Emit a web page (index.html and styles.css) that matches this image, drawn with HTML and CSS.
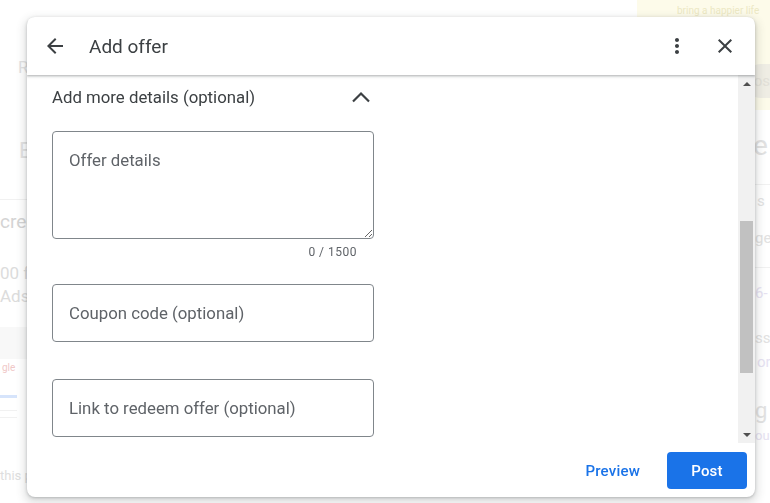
FILE: index.html
```html
<!DOCTYPE html>
<html lang="en">
<head>
    <meta charset="UTF-8">
    <meta name="viewport" content="width=device-width, initial-scale=1.0">
    <title>Add offer</title>
    <link rel="stylesheet" href="styles.css">
</head>
<body>
    <!-- Faded page behind the dialog -->
    <div class="page">
        <div class="page-left">
            <div class="bg-r">R</div>
            <div class="bg-e">E</div>
            <div class="bg-rule"></div>
            <div class="bg-cred">credible</div>
            <div class="bg-small">00 free</div>
            <div class="bg-small bg-ads">Ads</div>
            <div class="bg-block"></div>
            <div class="bg-logo">gle</div>
            <div class="bg-bar"></div>
            <div class="bg-rule bg-rule-a"></div>
            <div class="bg-rule bg-rule-b"></div>
            <div class="bg-this">this page</div>
        </div>
        <div class="page-right">
            <div class="bg-banner">
                <span class="bg-banner-text">bring a happier life</span>
                <span class="bg-pill">os</span>
            </div>
            <div class="bg-big">e</div>
            <div class="bg-rule"></div>
            <div class="bg-s">s</div>
            <div class="bg-ge">ge</div>
            <div class="bg-rule"></div>
            <div class="bg-ge bg-six">6-</div>
            <div class="bg-s bg-ss">ss</div>
            <div class="bg-s bg-or">or</div>
            <div class="bg-g">g</div>
            <div class="bg-s bg-ou">ou</div>
        </div>
    </div>

    <div class="dialog">
        <header class="dialog-head">
            <button class="icon-btn" aria-label="Back">
                <svg width="24" height="24" viewBox="0 0 24 24"><path d="M20 11H7.83l5.59-5.59L12 4l-8 8 8 8 1.41-1.41L7.83 13H20v-2z"/></svg>
            </button>
            <h1 class="dialog-title">Add offer</h1>
            <button class="icon-btn" aria-label="More">
                <svg width="24" height="24" viewBox="0 0 24 24"><path d="M12 8c1.1 0 2-.9 2-2s-.9-2-2-2-2 .9-2 2 .9 2 2 2zm0 2c-1.1 0-2 .9-2 2s.9 2 2 2 2-.9 2-2-.9-2-2-2zm0 6c-1.1 0-2 .9-2 2s.9 2 2 2 2-.9 2-2-.9-2-2-2z"/></svg>
            </button>
            <button class="icon-btn" aria-label="Close">
                <svg width="24" height="24" viewBox="0 0 24 24"><path d="M19 6.41L17.590 5 12 10.59 6.41 5 5 6.41 10.59 12 5 17.59 6.41 19 12 13.41 17.59 19 19 17.59 13.41 12z"/></svg>
            </button>
        </header>

        <div class="dialog-body">
            <div class="scroll-area">
                <div class="section-head">
                    <span>Add more details (optional)</span>
                    <svg class="chevron" width="20" height="12" viewBox="0 0 20 12"><path d="M2 10.5 10 2.5 18 10.5" fill="none" stroke="#3c4043" stroke-width="2.2"/></svg>
                </div>

                <textarea class="field field-area" placeholder="Offer details"></textarea>
                <div class="counter">0 / 1500</div>

                <input class="field field-line field-coupon" type="text" placeholder="Coupon code (optional)">
                <input class="field field-line field-link" type="text" placeholder="Link to redeem offer (optional)">
            </div>

            <div class="scrollbar">
                <div class="sb-btn"><span class="sb-up"></span></div>
                <div class="sb-track"><div class="sb-thumb"></div></div>
                <div class="sb-btn"><span class="sb-down"></span></div>
            </div>
        </div>

        <footer class="dialog-foot">
            <button class="btn-text">Preview</button>
            <button class="btn-primary">Post</button>
        </footer>
    </div>
</body>
</html>
```

FILE: styles.css
```css
body {
    margin: 0;
    width: 770px;
    height: 503px;
    overflow: hidden;
    background: #ffffff;
    font-family: Roboto, "Liberation Sans", sans-serif;
}

/* Faded page behind the dialog */
.page {
    display: flex;
    justify-content: space-between;
    height: 503px;
    color: #e2e2e2;
}

.page-left {
    width: 120px;
    padding-top: 56px;
}

.bg-r {
    padding-left: 18px;
    font-size: 17px;
    line-height: 22px;
}

.bg-e {
    margin-top: 58px;
    padding-left: 19px;
    font-size: 22px;
    line-height: 30px;
}

.bg-rule {
    height: 1px;
    background: #f1f1f1;
    margin-top: 33px;
}

.bg-cred {
    margin-top: 10px;
    font-size: 19px;
    line-height: 24px;
    color: #d4d4d4;
}

.bg-small {
    margin-top: 28px;
    font-size: 17px;
    line-height: 22px;
    color: #dcdcdc;
}

.bg-ads {
    margin-top: 1px;
}

.bg-block {
    margin-top: 20px;
    height: 32px;
    background: #f8f8f8;
}

.bg-logo {
    padding-left: 2px;
    font-size: 10px;
    line-height: 18px;
    color: #f0c8c8;
}

.bg-bar {
    margin-top: 18px;
    width: 17px;
    height: 3px;
    background: #d6e4fb;
}

.bg-rule-a {
    width: 17px;
    margin-top: 12px;
}

.bg-rule-b {
    width: 17px;
    margin-top: 6px;
}

.bg-this {
    margin-top: 50px;
    font-size: 13px;
    color: #dedede;
}

.page-right {
    width: 133px;
}

.bg-banner {
    display: flex;
    flex-direction: column;
    align-items: flex-end;
    height: 110px;
    background: #fdfbea;
}

.bg-banner-text {
    margin-top: 5px;
    align-self: flex-start;
    padding-left: 40px;
    font-size: 10px;
    white-space: nowrap;
    color: #ece8c4;
}

.bg-pill {
    margin-top: 48px;
    padding: 8px 0 8px 10px;
    border-radius: 18px 0 0 18px;
    background: #efede4;
    color: #e2e0d8;
    font-size: 15px;
}

.bg-big {
    padding-left: 116px;
    font-size: 28px;
    line-height: 40px;
    margin-top: 16px;
}

.page-right .bg-rule {
    margin-top: 18px;
}

.bg-s {
    padding-left: 120px;
    font-size: 15px;
    line-height: 20px;
    margin-top: 6px;
}

.bg-ge {
    padding-left: 118px;
    font-size: 15px;
    line-height: 22px;
    margin-top: 16px;
}

.bg-six {
    margin-top: 14px;
    color: #e6e2f2;
}

.bg-ss {
    padding-left: 118px;
    margin-top: 24px;
}

.bg-or {
    margin-top: 4px;
    color: #e6e2f2;
}

.bg-g {
    padding-left: 118px;
    font-size: 22px;
    line-height: 30px;
    margin-top: 24px;
}

.bg-ou {
    margin-top: 0;
    padding-left: 118px;
    font-size: 13px;
    color: #e6e2f2;
}

/* Dialog */
.dialog {
    position: fixed;
    left: 27px;
    top: 17px;
    width: 728px;
    height: 480px;
    display: flex;
    flex-direction: column;
    background: #fff;
    border-radius: 8px;
    overflow: hidden;
    box-shadow: 0 1px 3px rgba(60, 64, 67, 0.3), 0 4px 8px 3px rgba(60, 64, 67, 0.15);
}

.dialog-head {
    position: relative;
    z-index: 1;
    display: flex;
    align-items: center;
    gap: 8px;
    height: 58px;
    padding: 0 10px 0 8px;
    flex-shrink: 0;
    background: #fff;
    box-shadow: 0 1px 2px rgba(60, 64, 67, 0.3), 0 1px 3px 1px rgba(60, 64, 67, 0.12);
}

.icon-btn {
    display: flex;
    align-items: center;
    justify-content: center;
    width: 40px;
    height: 40px;
    padding: 0;
    border: none;
    border-radius: 50%;
    background: transparent;
    fill: #3c4043;
}

.dialog-title {
    flex: 1;
    margin: 0 0 0 6px;
    font-size: 19px;
    font-weight: 400;
    color: #3c4043;
}

.dialog-body {
    display: flex;
    flex: 1;
    min-height: 0;
}

.scroll-area {
    flex: 1;
    overflow: hidden;
    padding: 10px 0 0 25px;
}

.section-head {
    display: flex;
    align-items: center;
    justify-content: space-between;
    width: 322px;
    height: 24px;
    font-size: 16.8px;
    color: #3c4043;
}

.chevron {
    margin-right: 3px;
}

.field {
    display: block;
    box-sizing: border-box;
    width: 322px;
    border: 1px solid #80868b;
    border-radius: 4px;
    font-family: Roboto, "Liberation Sans", sans-serif;
    font-size: 16.8px;
    color: #3c4043;
    background: #fff;
    outline: none;
}

.field::placeholder {
    color: #5f6368;
}

.field-area {
    margin-top: 22px;
    height: 108px;
    padding: 16px;
    line-height: 24px;
}

.counter {
    width: 322px;
    box-sizing: border-box;
    margin-top: 5px;
    padding-right: 17px;
    text-align: right;
    font-size: 12px;
    line-height: 16px;
    letter-spacing: 0.5px;
    color: #5f6368;
}

.field-line {
    height: 58px;
    padding: 0 16px;
}

.field-coupon {
    margin-top: 24px;
}

.field-link {
    margin-top: 37px;
}

/* Scrollbar */
.scrollbar {
    display: flex;
    flex-direction: column;
    width: 17px;
    background: #f1f1f1;
}

.sb-btn {
    display: flex;
    align-items: center;
    justify-content: center;
    height: 17px;
}

.sb-up {
    border-left: 4px solid transparent;
    border-right: 4px solid transparent;
    border-bottom: 4px solid #505050;
}

.sb-down {
    border-left: 4px solid transparent;
    border-right: 4px solid transparent;
    border-top: 4px solid #505050;
}

.sb-track {
    flex: 1;
    padding-top: 129px;
}

.sb-thumb {
    height: 152px;
    margin: 0 2px;
    background: #c1c1c1;
}

/* Footer */
.dialog-foot {
    display: flex;
    justify-content: flex-end;
    align-items: flex-start;
    gap: 8px;
    height: 54px;
    padding: 9px 8px 0 0;
    box-sizing: border-box;
    flex-shrink: 0;
}

.btn-text,
.btn-primary {
    height: 37px;
    border: none;
    border-radius: 4px;
    font-family: Roboto, "Liberation Sans", sans-serif;
    font-size: 15px;
    font-weight: 500;
    letter-spacing: 0.2px;
}

.btn-text {
    padding: 0 19px;
    background: transparent;
    color: #1a73e8;
}

.btn-primary {
    width: 80px;
    background: #1a73e8;
    color: #fff;
}
```
